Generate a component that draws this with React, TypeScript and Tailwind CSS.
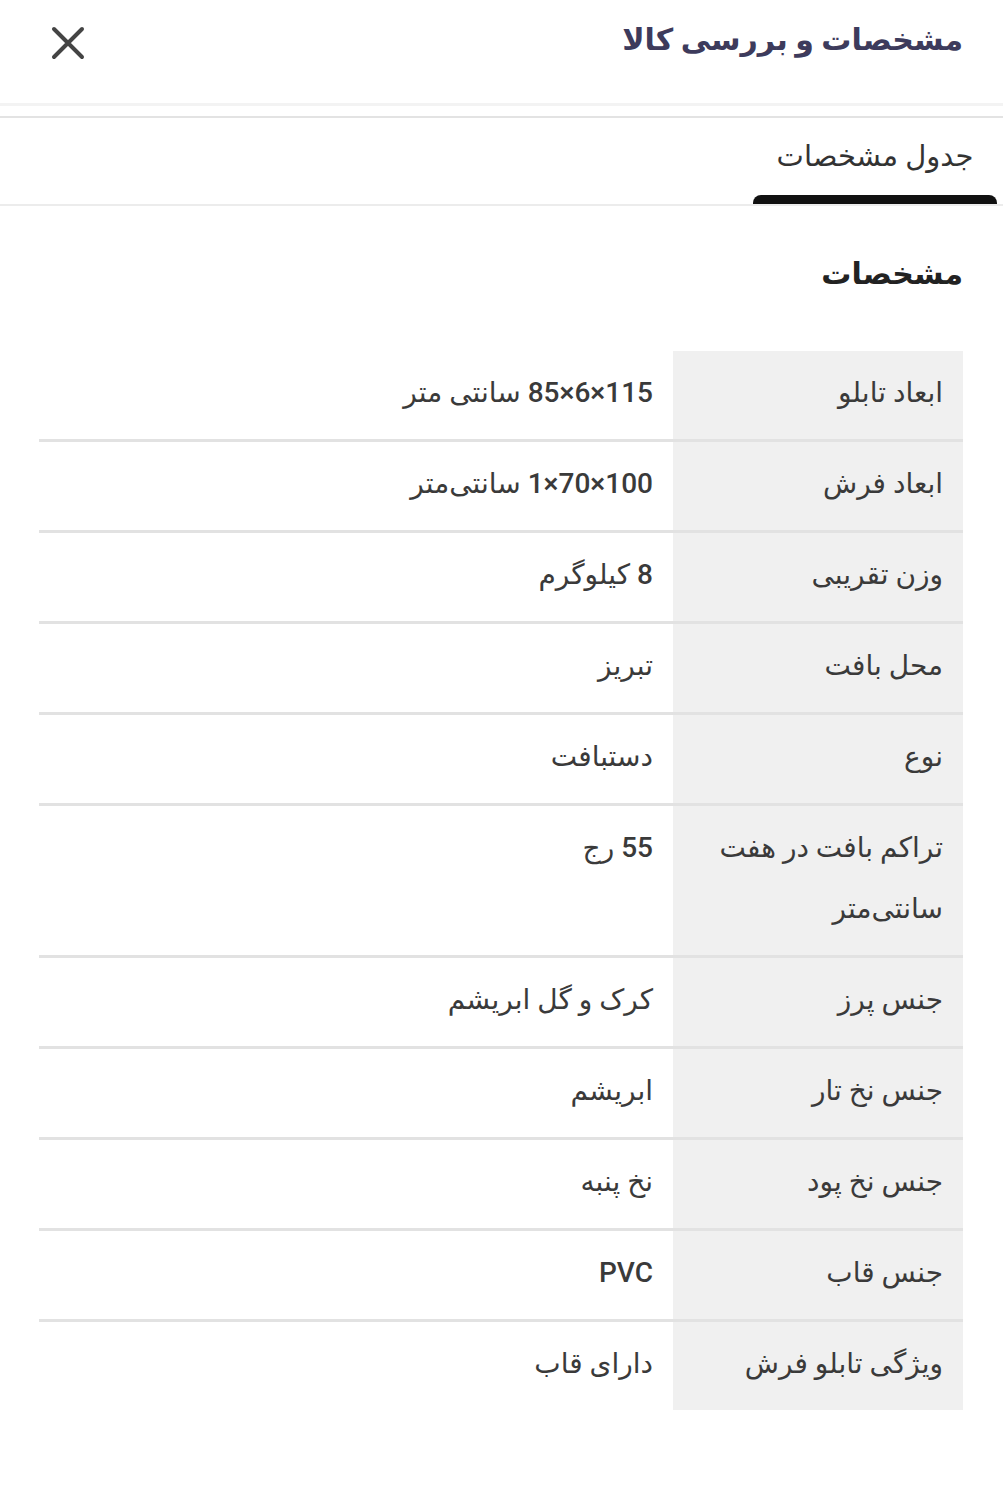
import React from "react";

const rows: [string, string][] = [
  ["ابعاد تابلو", "115×6×85 سانتی متر"],
  ["ابعاد فرش", "100×70×1 سانتی‌متر"],
  ["وزن تقریبی", "8 کیلوگرم"],
  ["محل بافت", "تبریز"],
  ["نوع", "دستبافت"],
  ["تراکم بافت در هفت سانتی‌متر", "55 رج"],
  ["جنس پرز", "کرک و گل ابریشم"],
  ["جنس نخ تار", "ابریشم"],
  ["جنس نخ پود", "نخ پنبه"],
  ["جنس قاب", "PVC"],
  ["ویژگی تابلو فرش", "دارای قاب"],
];

export default function App() {
  return (
    <div
      dir="rtl"
      className="w-[1003px] min-h-[1500px] bg-white text-[#3a3a3a] font-['Roboto','DejaVu_Sans',sans-serif]"
    >
      <div className="h-[78px] flex items-center justify-between pr-[40px] pl-[50px]">
        <div className="text-[30px] font-bold text-[#3d3b5c]">مشخصات و بررسی کالا</div>
        <svg width="36" height="36" viewBox="0 0 36 36" className="mt-[8px]">
          <path d="M4 4 L32 32 M32 4 L4 32" stroke="#444" strokeWidth="4" strokeLinecap="round" />
        </svg>
      </div>
      <div className="mt-[25px] h-[3px] bg-[#f3f3f3]" />
      <div className="mt-[10px] h-[2px] bg-[#e3e3e3]" />
      <div className="h-[88px] flex items-stretch pr-[6px] border-b-[2px] border-[#ececec]">
        <div className="w-[244px] flex flex-col">
          <div className="flex-1 flex items-center justify-center text-[29px] text-[#333]">جدول مشخصات</div>
          <div className="h-[9px] bg-[#111] rounded-t-[8px]" />
        </div>
      </div>
      <div className="pr-[40px] pl-[39px]">
        <div className="pt-[43px] text-[30px] font-bold text-[#222] leading-[50px]">مشخصات</div>
        <div className="mt-[52px]">
          {rows.map(([k, v], i) => (
            <div
              key={i}
              className={`flex ${i < rows.length - 1 ? "border-b-[3px] border-[#e2e2e2]" : ""}`}
            >
              <div className="w-[290px] shrink-0 bg-[#f0f0f0] px-[20px] pt-[11px] pb-[16px] text-[28px] leading-[61px]">{k}</div>
              <div className="flex-1 pr-[20px] pt-[11px] pb-[16px] text-[28px] leading-[61px] font-medium">{v}</div>
            </div>
          ))}
        </div>
      </div>
    </div>
  );
}
